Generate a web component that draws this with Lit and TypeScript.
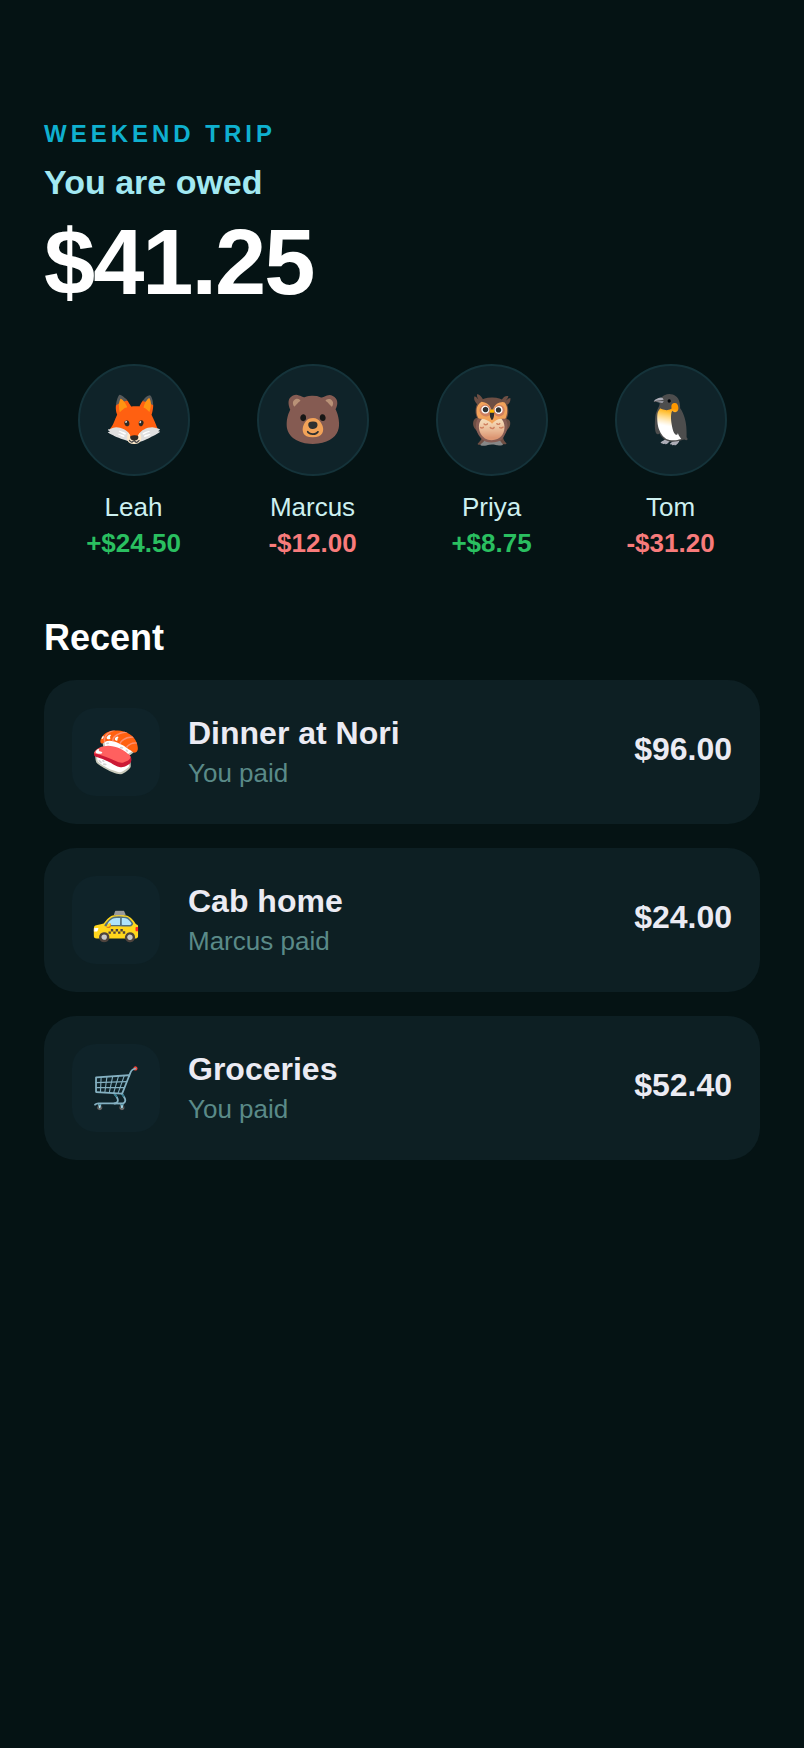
import { LitElement, html, css } from "lit";
import { customElement } from "lit/decorators.js";
import { classMap } from "lit/directives/class-map.js";

interface Member {
    name: string;
    avatar: string;
    balance: number;
}

interface Expense {
    title: string;
    icon: string;
    payer: string;
    amount: number;
}

const MEMBERS: Member[] = [
    { name: "Leah", avatar: "🦊", balance: 24.5 },
    { name: "Marcus", avatar: "🐻", balance: -12 },
    { name: "Priya", avatar: "🦉", balance: 8.75 },
    { name: "Tom", avatar: "🐧", balance: -31.2 },
];

const EXPENSES: Expense[] = [
    { title: "Dinner at Nori", icon: "🍣", payer: "You", amount: 96 },
    { title: "Cab home", icon: "🚕", payer: "Marcus", amount: 24 },
    { title: "Groceries", icon: "🛒", payer: "You", amount: 52.4 },
];

const money = (value: number) => `$${Math.abs(value).toFixed(2)}`;
const signed = (value: number) => `${value < 0 ? "-" : "+"}${money(value)}`;

@customElement("app-root")
export class AppRoot extends LitElement {
    static styles = css`
    :host {
      display: block;
      box-sizing: border-box;
      min-height: 100vh;
      padding: 120px 44px 44px;
      background: #051314;
      color: #ffffff;
      font-family: "Liberation Sans", Arial, sans-serif;
    }

    h1, h2, h3, p, ul {
      margin: 0;
      padding: 0;
    }

    ul {
      list-style: none;
    }

    .group {
      font-size: 24px;
      line-height: 28px;
      font-weight: 700;
      letter-spacing: 4px;
      text-transform: uppercase;
      color: #0fb0cf;
    }

    .label {
      margin-top: 14px;
      font-size: 34px;
      line-height: 40px;
      font-weight: 700;
      color: #a2e8f1;
    }

    .total {
      margin-top: 8px;
      font-size: 92px;
      line-height: 104px;
      font-weight: 700;
      letter-spacing: -2px;
    }

    .members {
      display: grid;
      grid-template-columns: repeat(4, 1fr);
      margin-top: 50px;
    }

    .member {
      display: flex;
      flex-direction: column;
      align-items: center;
    }

    .avatar {
      display: grid;
      place-items: center;
      box-sizing: border-box;
      width: 112px;
      height: 112px;
      border: 2px solid #15333a;
      border-radius: 50%;
      background: #0f2329;
      font-size: 48px;
      line-height: 56px;
    }

    .name {
      margin-top: 16px;
      font-size: 26px;
      line-height: 30px;
      color: #cdf0f0;
    }

    .balance {
      margin-top: 6px;
      font-size: 26px;
      line-height: 30px;
      font-weight: 700;
      color: #2abf60;
    }

    .balance.negative {
      color: #f87b7b;
    }

    h2 {
      margin-top: 60px;
      font-size: 36px;
      line-height: 40px;
    }

    .expenses {
      display: flex;
      flex-direction: column;
      gap: 24px;
      margin-top: 22px;
    }

    .expense {
      display: flex;
      align-items: center;
      gap: 28px;
      padding: 28px;
      border-radius: 32px;
      background: #0d1f23;
    }

    .icon {
      display: grid;
      place-items: center;
      width: 88px;
      height: 88px;
      border-radius: 24px;
      background: #0f2329;
      font-size: 40px;
      line-height: 48px;
    }

    .details {
      flex: 1;
    }

    .title {
      font-size: 32px;
      line-height: 36px;
      font-weight: 700;
      color: #ebebf3;
    }

    .payer {
      margin-top: 6px;
      font-size: 26px;
      line-height: 32px;
      color: #5a8a88;
    }

    .amount {
      padding-bottom: 6px;
      font-size: 32px;
      line-height: 36px;
      font-weight: 700;
      color: #ebebf3;
    }
  `;

    renderMember(member: Member) {
        return html`
      <li class="member">
        <div class="avatar">${member.avatar}</div>
        <p class="name">${member.name}</p>
        <p class=${classMap({ balance: true, negative: member.balance < 0 })}>${signed(member.balance)}</p>
      </li>
    `;
    }

    renderExpense(expense: Expense) {
        return html`
      <li class="expense">
        <div class="icon">${expense.icon}</div>
        <div class="details">
          <h3 class="title">${expense.title}</h3>
          <p class="payer">${expense.payer} paid</p>
        </div>
        <div class="amount">${money(expense.amount)}</div>
      </li>
    `;
    }

    render() {
        return html`
      <main>
        <header>
          <h1 class="group">Weekend trip</h1>
          <p class="label">You are owed</p>
          <p class="total">${money(41.25)}</p>
        </header>
        <ul class="members">${MEMBERS.map((member) => this.renderMember(member))}</ul>
        <section>
          <h2>Recent</h2>
          <ul class="expenses">${EXPENSES.map((expense) => this.renderExpense(expense))}</ul>
        </section>
      </main>
    `;
    }
}

declare global {
    interface HTMLElementTagNameMap {
        "app-root": AppRoot;
    }
}
